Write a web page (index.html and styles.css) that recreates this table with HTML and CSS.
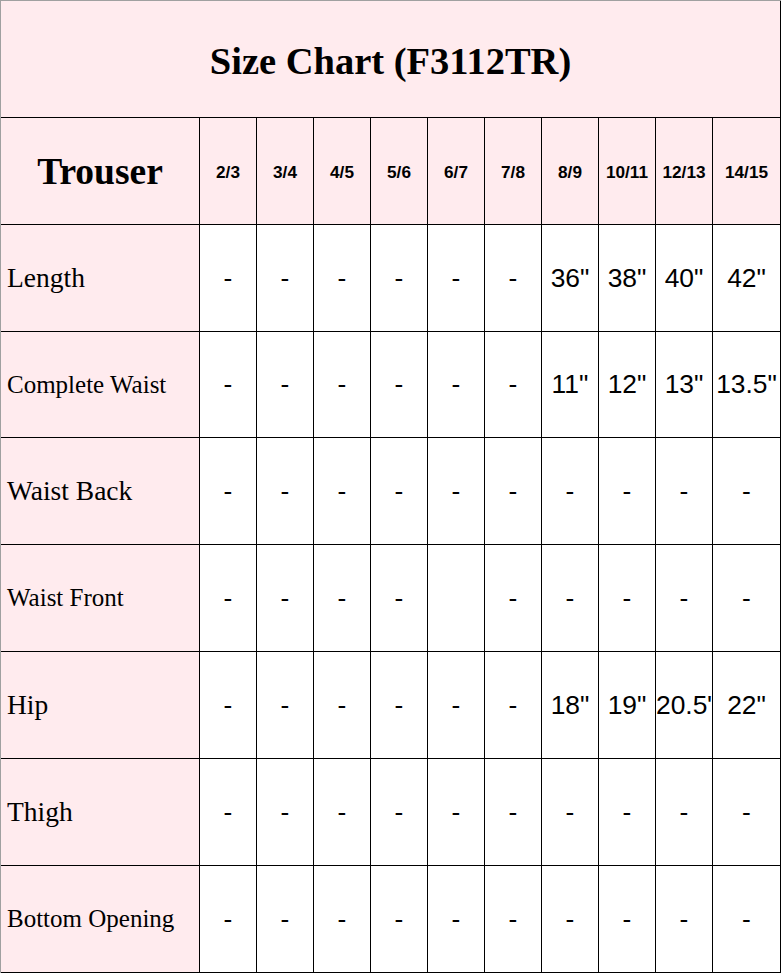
FILE: index.html
```html
<!DOCTYPE html>
<html lang="en">
<head>
<meta charset="utf-8">
<title>Size Chart (F3112TR)</title>
<link rel="stylesheet" href="styles.css">
</head>
<body>
<div class="chart">
  <div class="cell title">Size Chart (F3112TR)</div>

  <div class="cell pink trouser">Trouser</div>
  <div class="cell pink size">2/3</div>
  <div class="cell pink size">3/4</div>
  <div class="cell pink size">4/5</div>
  <div class="cell pink size">5/6</div>
  <div class="cell pink size">6/7</div>
  <div class="cell pink size">7/8</div>
  <div class="cell pink size">8/9</div>
  <div class="cell pink size">10/11</div>
  <div class="cell pink size">12/13</div>
  <div class="cell pink size">14/15</div>

  <div class="cell pink label big">Length</div>
  <div class="cell val">-</div><div class="cell val">-</div><div class="cell val">-</div><div class="cell val">-</div><div class="cell val">-</div><div class="cell val">-</div>
  <div class="cell val">36"</div><div class="cell val">38"</div><div class="cell val">40"</div><div class="cell val">42"</div>

  <div class="cell pink label small">Complete Waist</div>
  <div class="cell val">-</div><div class="cell val">-</div><div class="cell val">-</div><div class="cell val">-</div><div class="cell val">-</div><div class="cell val">-</div>
  <div class="cell val">11"</div><div class="cell val">12"</div><div class="cell val">13"</div><div class="cell val">13.5"</div>

  <div class="cell pink label big">Waist Back</div>
  <div class="cell val">-</div><div class="cell val">-</div><div class="cell val">-</div><div class="cell val">-</div><div class="cell val">-</div><div class="cell val">-</div>
  <div class="cell val">-</div><div class="cell val">-</div><div class="cell val">-</div><div class="cell val">-</div>

  <div class="cell pink label small">Waist Front</div>
  <div class="cell val">-</div><div class="cell val">-</div><div class="cell val">-</div><div class="cell val">-</div><div class="cell val"></div><div class="cell val">-</div>
  <div class="cell val">-</div><div class="cell val">-</div><div class="cell val">-</div><div class="cell val">-</div>

  <div class="cell pink label big">Hip</div>
  <div class="cell val">-</div><div class="cell val">-</div><div class="cell val">-</div><div class="cell val">-</div><div class="cell val">-</div><div class="cell val">-</div>
  <div class="cell val">18"</div><div class="cell val">19"</div><div class="cell val">20.5"</div><div class="cell val">22"</div>

  <div class="cell pink label big">Thigh</div>
  <div class="cell val">-</div><div class="cell val">-</div><div class="cell val">-</div><div class="cell val">-</div><div class="cell val">-</div><div class="cell val">-</div>
  <div class="cell val">-</div><div class="cell val">-</div><div class="cell val">-</div><div class="cell val">-</div>

  <div class="cell pink label small">Bottom Opening</div>
  <div class="cell val">-</div><div class="cell val">-</div><div class="cell val">-</div><div class="cell val">-</div><div class="cell val">-</div><div class="cell val">-</div>
  <div class="cell val">-</div><div class="cell val">-</div><div class="cell val">-</div><div class="cell val">-</div>
</div>
</body>
</html>
```
FILE: styles.css
```css
html, body {
  margin: 0;
  padding: 0;
  background: #ffffff;
}

.chart {
  box-sizing: border-box;
  width: 781px;
  height: 973px;
  display: grid;
  grid-template-columns: 198px repeat(9, 56px) 67px;
  grid-template-rows: 116px 106px 106px 105px 106px 106px 106px 106px 106px;
  gap: 1px;
  background: #000000;
  border-top: 1px solid #a0a0a0;
  border-left: 1px solid #a0a0a0;
  padding: 0 1px 1px 0;
}

.cell {
  display: flex;
  flex-direction: column;
  justify-content: center;
  text-align: center;
  overflow: hidden;
  white-space: nowrap;
  background: #ffffff;
  color: #000000;
}

.pink {
  background: #ffebee;
}

.title {
  grid-column: 1 / -1;
  background: #ffebee;
  font-family: "Liberation Serif", "Times New Roman", serif;
  font-weight: bold;
  font-size: 38.5px;
  padding-top: 3px;
  box-sizing: border-box;
}

.trouser {
  font-family: "Liberation Serif", "Times New Roman", serif;
  font-weight: bold;
  font-size: 37.5px;
}

.size {
  font-family: "Liberation Sans", Arial, sans-serif;
  font-weight: bold;
  font-size: 17.2px;
  padding-top: 2px;
  box-sizing: border-box;
}

.label {
  text-align: left;
  padding-left: 6px;
  font-family: "Liberation Serif", "Times New Roman", serif;
}

.label.big {
  font-size: 27.5px;
}

.label.small {
  font-size: 25px;
}

.val {
  font-family: "Liberation Sans", Arial, sans-serif;
  font-size: 26.4px;
}
```
